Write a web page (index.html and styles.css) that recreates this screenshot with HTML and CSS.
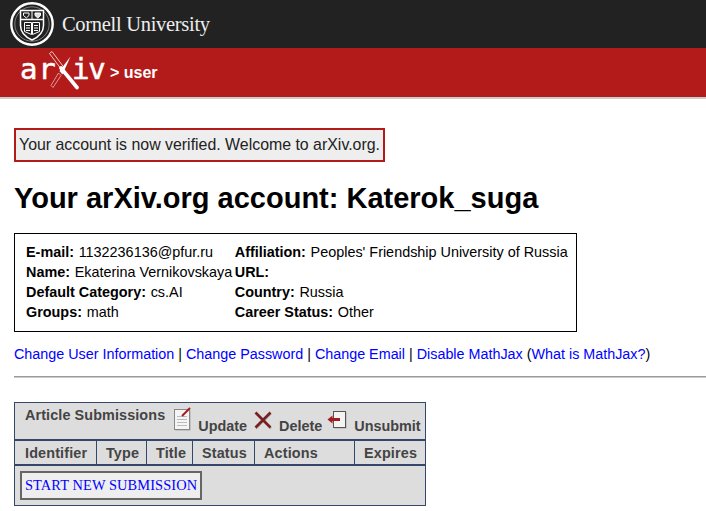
FILE: index.html
```html
<!DOCTYPE html>
<html lang="en">
<head>
<meta charset="utf-8">
<title>arXiv user</title>
<link rel="stylesheet" href="styles.css">
</head>
<body>
<header class="cornell">
  <svg class="seal" width="46" height="46" viewBox="0 0 46 46" aria-hidden="true">
    <circle cx="23" cy="23" r="20.7" fill="none" stroke="#fff" stroke-width="2.4"/>
    <circle cx="23" cy="23" r="17.2" fill="none" stroke="#fff" stroke-width="0.7" opacity=".6"/>
    <path d="M11.5 9.5h23v15c0 7-5 11.5-11.5 14.5C16.500 36 11.500 31.500 11.500 24.500z" fill="#222" stroke="#fff" stroke-width="1.500"/>
    <path d="M11.500 18.500h23" stroke="#fff" stroke-width="1.500"/>
    <path d="M23 10v8.500" stroke="#fff" stroke-width="1"/>
    <path d="M14.500 12h5.500v2.500l-2.700 2.500-2.800-2.500z" fill="none" stroke="#fff" stroke-width="1"/>
    <path d="M26 12h5.500v2.500l-2.700 2.500-2.800-2.500z" fill="#ddd" stroke="#fff" stroke-width="1"/>
    <path d="M15.500 21.500h7v12l-7-3zM30.500 21.500h-7v12l7-3z" fill="#222" stroke="#fff" stroke-width="1"/>
    <path d="M17 24.500h4M17 27h4M17 29.500h4M25 24.500h4M25 27h4M25 29.500h4" stroke="#fff" stroke-width="1"/>
  </svg>
  <span class="cornell-name">Cornell University</span>
</header>
<div class="band">
  <div class="logo">
    <span class="logo-text">ar</span>
    <svg class="logo-x" width="32" height="40" viewBox="48 50 32 40" aria-hidden="true">
      <path d="M49.500 53.500 L52 51.500 L64 67.500 L61.500 69.500z" fill="none" stroke="#efc4c4" stroke-width="1"/>
      <path d="M61 68 L77 87.500" stroke="#fff" stroke-width="3.600" stroke-linecap="round"/>
      <path d="M70.500 56.500 L62.500 74.500 L59.500 71z" fill="#fff"/>
      <path d="M58.500 73 L51 85.500 L53 87.500 L61 75.500z" fill="none" stroke="#e09a9a" stroke-width="1"/>
    </svg>
    <span class="logo-text logo-end">iv</span>
  </div>
  <span class="crumb">&gt; user</span>
</div>
<main class="content">
  <p class="notice">Your account is now verified. Welcome to arXiv.org.</p>
  <h1 class="title">Your arXiv.org account: Katerok_suga</h1>
  <div class="info">
    <div class="info-col">
      <div><b>E-mail:</b> 1132236136@pfur.ru</div>
      <div><b>Name:</b> Ekaterina Vernikovskaya</div>
      <div><b>Default Category:</b> cs.AI</div>
      <div><b>Groups:</b> math</div>
    </div>
    <div class="info-col">
      <div><b>Affiliation:</b> Peoples' Friendship University of Russia</div>
      <div><b>URL:</b></div>
      <div><b>Country:</b> Russia</div>
      <div><b>Career Status:</b> Other</div>
    </div>
  </div>
  <p class="links"><a href="#">Change User Information</a> | <a href="#">Change Password</a> | <a href="#">Change Email</a> | <a href="#">Disable MathJax</a> (<a href="#">What is MathJax?</a>)</p>
  <hr class="rule">
  <table class="subs">
    <colgroup>
      <col class="c1"><col class="c2"><col class="c3"><col class="c4"><col class="c5"><col class="c6">
    </colgroup>
    <thead>
      <tr>
        <th colspan="6" class="subs-head">
          <div class="tools">
            <span class="subs-name">Article Submissions</span>
            <svg class="ico ico-up" width="20" height="24" viewBox="0 0 20 24" aria-hidden="true">
              <rect x="2.500" y="3.500" width="15" height="20" fill="#aaa"/>
              <rect x="1.500" y="2.500" width="15" height="20" fill="#f4f4f4" stroke="#888"/>
              <path d="M4 9.500h10M4 12.500h10M4 15.500h10M4 18.500h10" stroke="#bbb"/>
              <path d="M9 9 L17 1" stroke="#a51c1c" stroke-width="2"/>
            </svg>
            <span class="act act-update">Update</span>
            <svg class="ico ico-x" width="18" height="18" viewBox="0 0 18 18" aria-hidden="true">
              <path d="M2 2.500 L17 17.500M17 2.500 L2 17.500" stroke="#aaa" stroke-width="2"/>
              <path d="M1.500 1.500 L16.500 16.500M16.500 1.500 L1.500 16.500" stroke="#7a1f1f" stroke-width="2.600"/>
            </svg>
            <span class="act">Delete</span>
            <svg class="ico ico-un" width="20" height="20" viewBox="0 0 20 20" aria-hidden="true">
              <rect x="7.500" y="2.500" width="12" height="16" fill="#aaa"/>
              <rect x="6.500" y="1.500" width="12" height="16" fill="#f4f4f4" stroke="#555"/>
              <path d="M4 9.500h9" stroke="#a51c1c" stroke-width="3"/>
              <path d="M5.500 5.500 L0.500 9.500 L5.500 13.500z" fill="#a51c1c"/>
            </svg>
            <span class="act">Unsubmit</span>
          </div>
        </th>
      </tr>
      <tr class="cols">
        <th>Identifier</th>
        <th>Type</th>
        <th>Title</th>
        <th>Status</th>
        <th>Actions</th>
        <th>Expires</th>
      </tr>
    </thead>
    <tbody>
      <tr>
        <td colspan="6" class="start-cell"><a class="start" href="#">START NEW SUBMISSION</a></td>
      </tr>
    </tbody>
  </table>
</main>
</body>
</html>
```
FILE: styles.css
```css
html, body { margin: 0; padding: 0; }
body {
  background: #fff;
  color: #000;
  font-family: "Liberation Sans", Arial, sans-serif;
  font-size: 14.4px;
  overflow: hidden;
  height: 511px;
}
a { color: #00f; text-decoration: none; }
.cornell {
  height: 48px;
  background: #222;
  display: flex;
  align-items: center;
  padding-left: 9px;
  box-sizing: border-box;
}
.seal { display: block; margin-right: 7px; }
.cornell-name {
  font-family: "Liberation Serif", serif;
  color: #eee;
  font-size: 20.5px;
  letter-spacing: -0.3px;
}
.band {
  height: 49px;
  background: #b31b1b;
  border-bottom: 2px solid #ccc;
  display: flex;
  align-items: center;
  padding-left: 20px;
  color: #fff;
}
.logo { display: flex; align-items: center; width: 90px; height: 49px; }
.logo-text {
  font-family: "DejaVu Sans Mono", monospace;
  font-size: 29px;
  color: #fff;
  letter-spacing: 0.800px;
  line-height: 30px;
  margin-bottom: 7px;
  -webkit-text-stroke: 0.5px #fff;
}
.logo-x { display: block; flex: none; margin: 0 -8px 5px -8.500px; }
.logo-end { letter-spacing: -1.200px; }
.crumb { font-weight: bold; font-size: 16px; margin-top: 1px; }
.content { padding: 29px 0 0 14px; }
.notice {
  display: inline-block;
  margin: 0;
  border: 2px solid #b31b1b;
  background: #eee;
  padding: 6px 3px;
  font-size: 15.9px;
  line-height: 18px;
  color: #222;
}
.title {
  margin: 17px 0 16px;
  font-size: 29px;
  line-height: 38px;
  font-weight: bold;
}
.info {
  width: 563px;
  height: 99px;
  box-sizing: border-box;
  border: 1px solid #000;
  padding: 8px 0 0 11px;
  display: flex;
  gap: 2.500px;
  line-height: 20px;
}
.info b { margin-right: 0.700px; }
.links { margin: 12px 0 0; line-height: 20px; font-size: 14.35px; }
.rule {
  margin: 12px 0 0;
  border: 0;
  border-top: 1px solid #999;
  height: 1px;
  background: #ccc;
}
.subs {
  margin-top: 24px;
  width: 412px;
  border-collapse: separate;
  border-spacing: 0;
  background: #ddd;
  border: 1px solid #34466b;
  color: #444;
  table-layout: fixed;
}
.c1 { width: 82px; }
.c2 { width: 50px; }
.c3 { width: 46px; }
.c4 { width: 62px; }
.c5 { width: 100px; }
.c6 { width: 70px; }
.subs th { font-weight: bold; padding: 0; line-height: 20px; }
.subs-head {
  height: 36px;
  border-bottom: 2px solid #34466b;
  text-align: left;
  white-space: nowrap;
  vertical-align: top;
}
.tools {
  display: flex;
  align-items: flex-start;
  height: 34px;
  padding-left: 10px;
}
.subs-name { letter-spacing: 0.1px; margin-top: 2px; }
.ico { display: block; flex: none; overflow: visible; }
.act { margin-top: 13px; }
.ico-up { margin: 4px 5px 0 8px; }
.ico-x { margin: 8px 7px 0 7px; }
.ico-un { margin: 7px 7px 0 5px; }
.subs .cols th {
  height: 25px;
  box-sizing: border-box;
  padding: 0 0 0 9px;
  text-align: left;
  letter-spacing: 0.15px;
  border-right: 1px solid #34466b;
  border-bottom: 2px solid #34466b;
}
.subs .cols th:first-child { padding-left: 10px; }
.subs .cols th:last-child { border-right: 0; }
.start-cell { padding: 5px 0 5px 5px; }
.start {
  display: block;
  width: max-content;
  border: 2px solid #666;
  background: #eee;
  padding: 3px;
  font-family: "Liberation Serif", serif;
  font-size: 14.4px;
  letter-spacing: 0.1px;
  line-height: 19px;
}
```
